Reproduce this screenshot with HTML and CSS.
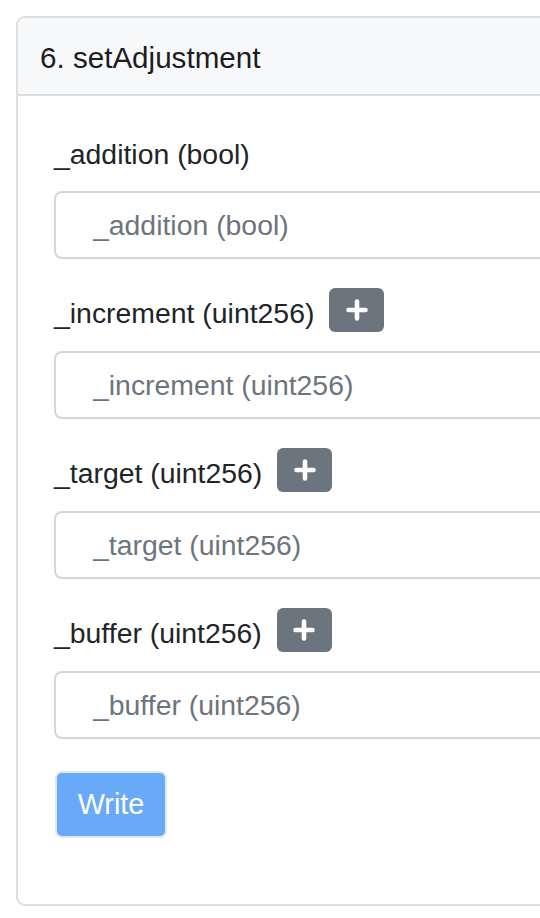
FILE: index.html
```html
<!DOCTYPE html>
<html>
<head>
<meta charset="utf-8">
<link rel="stylesheet" href="styles.css">
</head>
<body>
<div class="card">
  <div class="card-header">6. setAdjustment</div>
  <div class="card-body">
    <div class="group">
      <div class="label-row"><span class="label">_addition (bool)</span></div>
      <input class="input" type="text" placeholder="_addition (bool)">
    </div>
    <div class="group">
      <div class="label-row plus-row"><span class="label">_increment (uint256)</span><span class="plus-btn"><svg width="22" height="22" viewBox="0 0 22 22"><path d="M11 2.5v17M2.5 11h17" stroke="#fff" stroke-width="4.6" stroke-linecap="round" fill="none"/></svg></span></div>
      <input class="input" type="text" placeholder="_increment (uint256)">
    </div>
    <div class="group">
      <div class="label-row plus-row"><span class="label">_target (uint256)</span><span class="plus-btn"><svg width="22" height="22" viewBox="0 0 22 22"><path d="M11 2.5v17M2.5 11h17" stroke="#fff" stroke-width="4.6" stroke-linecap="round" fill="none"/></svg></span></div>
      <input class="input" type="text" placeholder="_target (uint256)">
    </div>
    <div class="group last">
      <div class="label-row plus-row"><span class="label">_buffer (uint256)</span><span class="plus-btn"><svg width="22" height="22" viewBox="0 0 22 22"><path d="M11 2.5v17M2.5 11h17" stroke="#fff" stroke-width="4.6" stroke-linecap="round" fill="none"/></svg></span></div>
      <input class="input" type="text" placeholder="_buffer (uint256)">
    </div>
    <button class="write-btn" type="button">Write</button>
  </div>
</div>
</body>
</html>
```
FILE: styles.css
```css
html, body {
  margin: 0;
  padding: 0;
  overflow: hidden;
  background: #fff;
}
body {
  font-family: "Liberation Sans", Arial, Helvetica, sans-serif;
  color: #212529;
  font-size: 28.4px;
}
.card {
  margin: 16px 0 0 16px;
  width: 620px;
  border: 2px solid #dedede;
  border-radius: 9px;
  overflow: hidden;
  background: #fff;
}
.card-header {
  height: 78px;
  box-sizing: border-box;
  padding: 2px 0 0 22px;
  display: flex;
  align-items: center;
  background: #f7f8fa;
  border-bottom: 2px solid #dcdcdc;
  font-size: 29.6px;
  line-height: 43px;
  color: #1d1d1f;
}
.card-body {
  padding: 37px 36px 66px 36px;
}
.group {
  display: flex;
  flex-direction: column;
  margin-bottom: 29px;
}
.group.last {
  margin-bottom: 32px;
}
.label-row {
  display: flex;
  align-items: flex-start;
  height: 43.5px;
  margin-bottom: 14.5px;
}
.label-row.plus-row {
  height: 49px;
  margin-bottom: 14px;
}
.label {
  line-height: 43.5px;
  white-space: nowrap;
}
.plus-row .label {
  margin-top: 4px;
}
.plus-btn {
  margin-left: 15px;
  width: 55px;
  height: 44px;
  background: #6c757d;
  border-radius: 6px;
  display: flex;
  align-items: center;
  justify-content: center;
}
.plus-btn svg {
  display: block;
}
.input {
  box-sizing: border-box;
  width: 560px;
  height: 68px;
  border: 2px solid #d3d7db;
  border-radius: 8px;
  padding: 0 0 0 37px;
  font-family: inherit;
  font-size: 28.4px;
  color: #495057;
  background: #fff;
  outline: none;
  margin: 0;
}
.input::placeholder {
  color: #6c757d;
  opacity: 1;
}
.write-btn {
  display: block;
  box-sizing: border-box;
  width: 112px;
  height: 67px;
  padding: 0;
  margin: 0 0 0 1px;
  border: 2px solid #e2e8ef;
  border-radius: 7px;
  background: #68a9f8;
  color: #fff;
  font-family: inherit;
  font-size: 28.8px;
  line-height: 1;
}
```
